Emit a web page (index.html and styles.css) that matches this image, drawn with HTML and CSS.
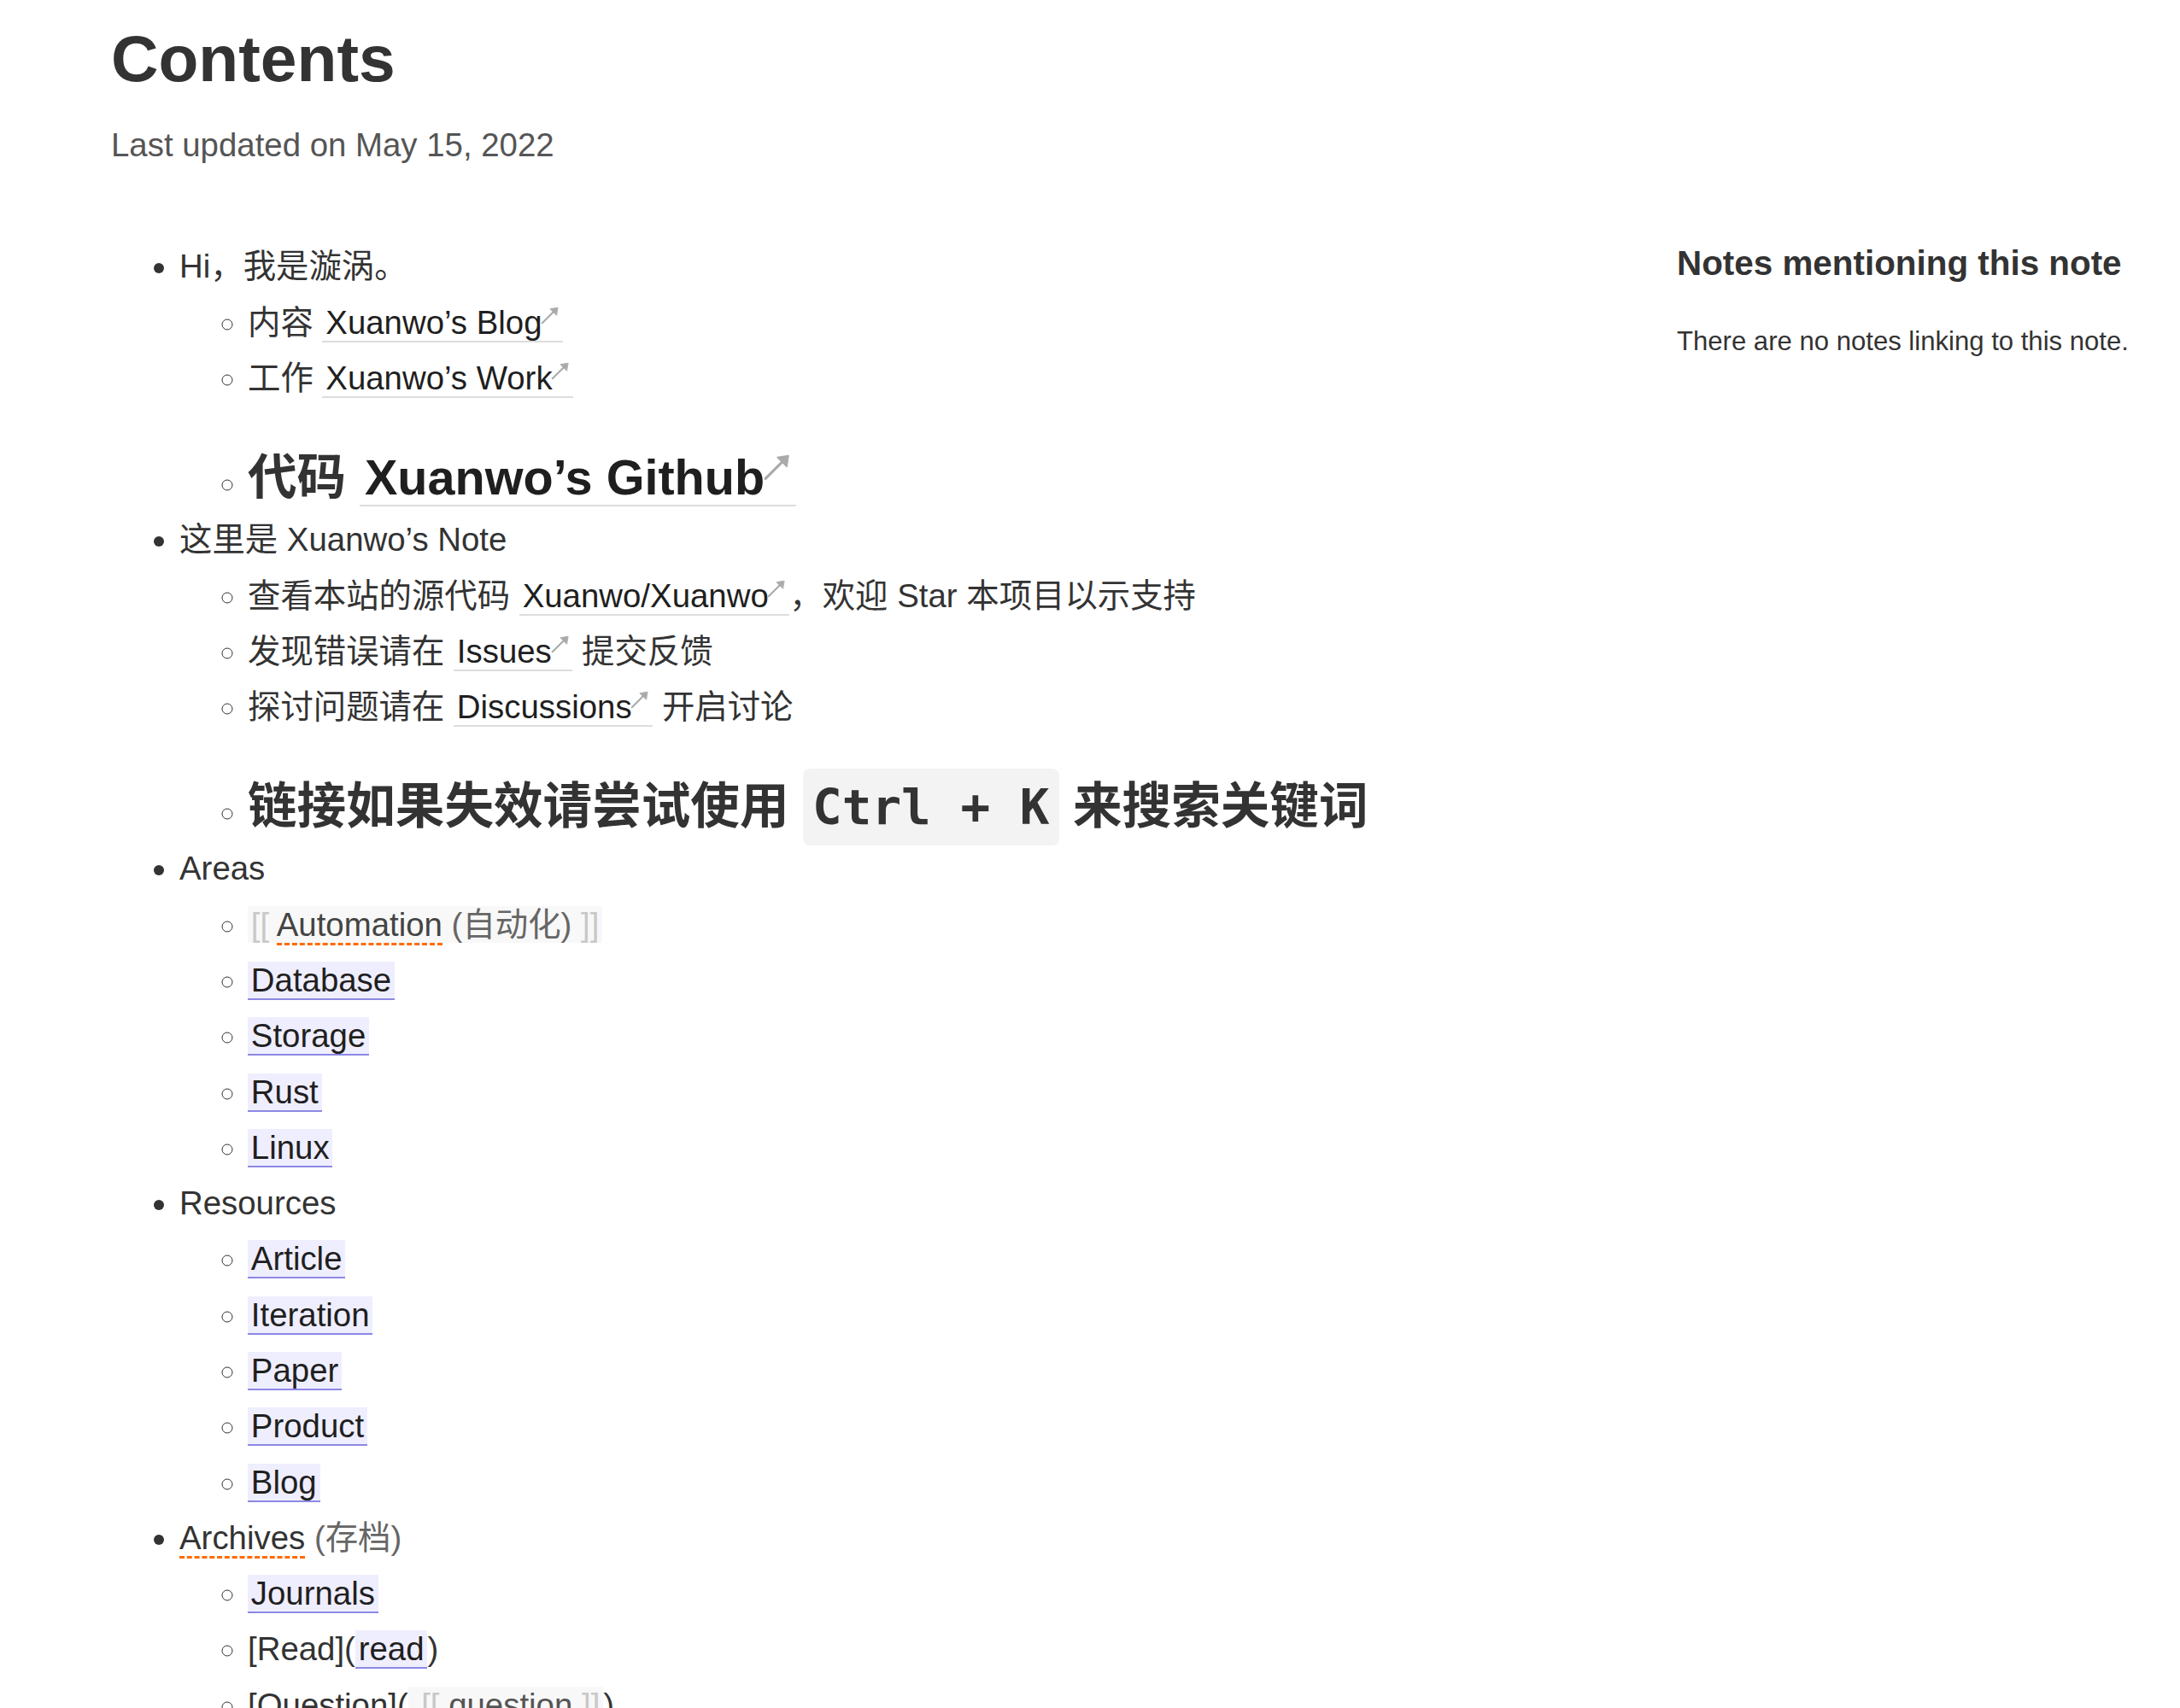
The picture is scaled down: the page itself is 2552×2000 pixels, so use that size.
FILE: index.html
```html
<!DOCTYPE html>
<html lang="zh-CN">
<head>
<meta charset="utf-8">
<title>Contents</title>
<link rel="stylesheet" href="styles.css">
</head>
<body>
<div class="page">
  <main class="main">
    <h1 class="title">Contents</h1>
    <p class="meta">Last updated on May 15, 2022</p>
    <ul class="tree">
      <li>Hi，我是漩涡。
        <ul>
          <li>内容 <a class="ext" href="#">Xuanwo’s Blog<svg class="arrow" viewBox="0 0 10 10"><path d="M1.2 8.8 L8.4 1.6"/><path class="head" d="M9 1 L5.2 1.6 L8.4 4.8 Z"/></svg></a></li>
          <li>工作 <a class="ext" href="#">Xuanwo’s Work<svg class="arrow" viewBox="0 0 10 10"><path d="M1.2 8.8 L8.4 1.6"/><path class="head" d="M9 1 L5.2 1.6 L8.4 4.8 Z"/></svg></a></li>
          <li><h3 class="big">代码 <a class="ext" href="#">Xuanwo’s Github<svg class="arrow" viewBox="0 0 10 10"><path d="M1.2 8.8 L8.4 1.6"/><path class="head" d="M9 1 L5.2 1.6 L8.4 4.8 Z"/></svg></a></h3></li>
        </ul>
      </li>
      <li>这里是 Xuanwo’s Note
        <ul>
          <li>查看本站的源代码 <a class="ext" href="#">Xuanwo/Xuanwo<svg class="arrow" viewBox="0 0 10 10"><path d="M1.2 8.8 L8.4 1.6"/><path class="head" d="M9 1 L5.2 1.6 L8.4 4.8 Z"/></svg></a>，欢迎 Star 本项目以示支持</li>
          <li>发现错误请在 <a class="ext" href="#">Issues<svg class="arrow" viewBox="0 0 10 10"><path d="M1.2 8.8 L8.4 1.6"/><path class="head" d="M9 1 L5.2 1.6 L8.4 4.8 Z"/></svg></a> 提交反馈</li>
          <li>探讨问题请在 <a class="ext" href="#">Discussions<svg class="arrow" viewBox="0 0 10 10"><path d="M1.2 8.8 L8.4 1.6"/><path class="head" d="M9 1 L5.2 1.6 L8.4 4.8 Z"/></svg></a> 开启讨论</li>
          <li><h3 class="big">链接如果失效请尝试使用 <code class="kbd">Ctrl + K</code> 来搜索关键词</h3></li>
        </ul>
      </li>
      <li>Areas
        <ul>
          <li><span class="wiki"><span class="br">[[</span> <span class="missing">Automation</span> <span class="note">(自动化)</span> <span class="br">]]</span></span></li>
          <li><a class="int" href="#">Database</a></li>
          <li><a class="int" href="#">Storage</a></li>
          <li><a class="int" href="#">Rust</a></li>
          <li><a class="int" href="#">Linux</a></li>
        </ul>
      </li>
      <li>Resources
        <ul>
          <li><a class="int" href="#">Article</a></li>
          <li><a class="int" href="#">Iteration</a></li>
          <li><a class="int" href="#">Paper</a></li>
          <li><a class="int" href="#">Product</a></li>
          <li><a class="int" href="#">Blog</a></li>
        </ul>
      </li>
      <li><span class="missing plain">Archives</span> <span class="note">(存档)</span>
        <ul>
          <li><a class="int" href="#">Journals</a></li>
          <li>[Read](<a class="int" href="#">read</a>)</li>
          <li>[Question](<span class="wiki wiki-wide"><span class="br">[[</span> <span class="wtext">question</span> <span class="br">]]</span></span>)</li>
        </ul>
      </li>
    </ul>
  </main>
  <aside class="aside">
    <h3 class="aside-title">Notes mentioning this note</h3>
    <p class="aside-text">There are no notes linking to this note.</p>
  </aside>
</div>
</body>
</html>
```

FILE: styles.css
```css
html, body {
  margin: 0;
  padding: 0;
  background: #ffffff;
}

body {
  font-family: "Liberation Sans", "Noto Sans CJK SC", sans-serif;
  font-size: 38.4px;
  line-height: 65.28px;
  color: #333333;
}

.page {
  display: flex;
  padding-left: 130px;
}

.main {
  flex: 1;
  min-width: 0;
}

.aside {
  width: 589px;
  flex: none;
  padding-top: 284px;
}

.title {
  font-size: 76.8px;
  line-height: 1.2;
  font-weight: 700;
  margin: 22px 0 0;
  color: #333333;
}

.meta {
  margin: 23px 0 0;
  color: #555555;
}

.tree {
  margin: 77px 0 0;
  padding-left: 80px;
  list-style: disc;
}

.tree ul {
  margin: 0;
  padding-left: 80px;
  list-style: circle;
}

.big {
  font-size: 57.6px;
  line-height: 69px;
  font-weight: 700;
  margin: 50px 0 5px;
  color: #333333;
}

a {
  text-decoration: none;
}

.ext {
  color: #1f1f1f;
  border-bottom: 2px solid #dddddd;
  padding: 0 0.1em;
}

.arrow {
  width: 0.6em;
  height: 0.6em;
  vertical-align: 0.26em;
  margin-left: -0.06em;
  overflow: visible;
}

.arrow path {
  fill: none;
  stroke: #aaaaaa;
  stroke-width: 0.9;
  stroke-linecap: round;
}

.arrow .head {
  fill: #aaaaaa;
  stroke-width: 0.4;
  stroke-linejoin: round;
}

.int {
  color: #1f1f1f;
  background: #efeefe;
  border-bottom: 2px solid #8d88e3;
  padding: 0 0.1em;
}

.wiki {
  background: #f8f8f8;
  padding: 0 0.1em;
  color: #555555;
}

.wiki-wide {
  padding-left: 0.4em;
}

.wiki .br {
  color: #c8c8c8;
}

.missing {
  color: #444444;
  border-bottom: 3px dashed #ff6a00;
}

.missing.plain {
  color: #333333;
}

.note {
  color: #666666;
}

.wtext {
  color: #555555;
}

.kbd {
  font-family: "DejaVu Sans Mono", monospace;
  font-size: 1em;
  font-weight: 700;
  background: #f3f3f3;
  border-radius: 8px;
  padding: 0.2em;
  color: #333333;
}

.aside-title {
  font-size: 40.4px;
  line-height: 48px;
  font-weight: 700;
  margin: 0;
  color: #333333;
}

.aside-text {
  font-size: 31.1px;
  line-height: 46px;
  margin: 45px 0 0;
  color: #333333;
}
```
